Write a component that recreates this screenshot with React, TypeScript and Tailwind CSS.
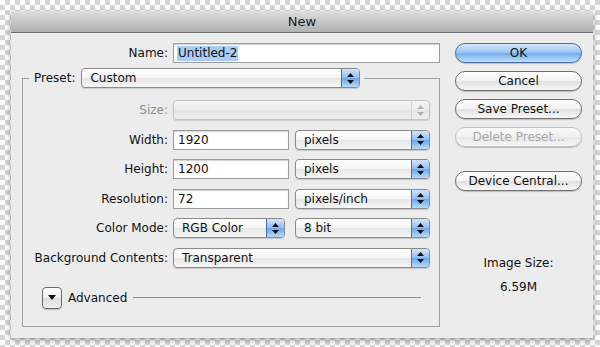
import React from 'react';

const font = 'font-["DejaVu_Sans",sans-serif]';

const Arrows: React.FC<{ disabled?: boolean }> = ({ disabled }) => (
  <svg width="7" height="11" viewBox="0 0 7 11">
    <polygon points="3.5,0 7,4 0,4" fill={disabled ? '#b4b4b4' : '#111'} />
    <polygon points="0,7 7,7 3.5,11" fill={disabled ? '#b4b4b4' : '#111'} />
  </svg>
);

const Popup: React.FC<{ value?: string; w: string; disabled?: boolean }> = ({ value, w, disabled }) => (
  <div
    className={`${w} h-[20px] flex items-stretch rounded-[4px] border shadow-[0_1px_1px_rgba(0,0,0,0.15)] ${
      disabled
        ? 'border-[#c4c4c4] bg-[linear-gradient(180deg,#f4f4f4_0%,#ececec_50%,#e4e4e4_51%,#efefef_100%)]'
        : 'border-[#8a8a8a] bg-[linear-gradient(180deg,#ffffff_0%,#f4f4f4_50%,#e6e6e6_51%,#f6f6f6_100%)]'
    }`}
  >
    <div className="flex-1 pl-[8px] flex items-center text-[12px] text-[#111] leading-none">{value}</div>
    <div
      className={`w-[18px] flex items-center justify-center rounded-r-[3px] ${
        disabled
          ? 'border-l border-[#d4d4d4]'
          : 'border-l border-[#4a6fb0] bg-[linear-gradient(180deg,#d2e5fb_0%,#94bef0_48%,#6ea7ea_52%,#b6dcfc_100%)]'
      }`}
    >
      <Arrows disabled={disabled} />
    </div>
  </div>
);

const Field: React.FC<{ value: string; w: string }> = ({ value, w }) => (
  <div className={`${w} h-[20px] flex items-center pl-[4px] bg-white border border-[#9c9c9c] shadow-[inset_0_1px_1px_rgba(0,0,0,0.18)] text-[12px] text-[#111]`}>
    {value}
  </div>
);

const Row: React.FC<{ label: string; disabled?: boolean; children: React.ReactNode }> = ({ label, disabled, children }) => (
  <div className="flex items-center h-[20px]">
    <div className={`w-[145px] text-right text-[12px] ${disabled ? 'text-[#8e8e8e]' : 'text-[#111]'}`}>{label}</div>
    <div className="ml-[5px] flex gap-[6px]">{children}</div>
  </div>
);

const Button: React.FC<{ label: string; primary?: boolean; disabled?: boolean; className?: string }> = ({
  label,
  primary,
  disabled,
  className = '',
}) => (
  <div
    className={`h-[20px] rounded-full flex items-center justify-center text-[12px] leading-none border shadow-[0_1px_1px_rgba(0,0,0,0.2)] ${className} ${
      primary
        ? 'border-[#4d6ea6] text-[#111] bg-[linear-gradient(180deg,#d6e9fc_0%,#98c3f2_48%,#74aced_52%,#bde0fd_100%)]'
        : disabled
        ? 'border-[#c2c2c2] text-[#a8a8a8] bg-[linear-gradient(180deg,#fafafa_0%,#f0f0f0_50%,#e8e8e8_51%,#f4f4f4_100%)]'
        : 'border-[#707070] text-[#111] bg-[linear-gradient(180deg,#ffffff_0%,#f3f3f3_48%,#e2e2e2_52%,#f7f7f7_100%)]'
    }`}
  >
    {label}
  </div>
);

export default function App() {
  return (
    <div
      className={`${font} w-[600px] h-[347px] pt-[11px] pl-[11px] bg-[conic-gradient(#d6d6d6_25%,#ffffff_0_50%,#d6d6d6_0_75%,#ffffff_0)] bg-[length:10px_10px]`}
    >
      <div className="w-[582px] h-[327px] flex flex-col shadow-[0_2px_6px_rgba(0,0,0,0.35)]">
        <div className="h-[22px] border-b border-[#6e6e6e] bg-[linear-gradient(180deg,#dedede_0%,#c6c6c6_50%,#b2b2b2_100%)] flex items-center justify-center text-[13px] text-[#1a1a1a]">
          New
        </div>

        <div className="flex-1 flex bg-[#ececec] pt-[10px] pb-[11px]">
          <div className="ml-[11px] w-[418px] flex flex-col">
            <div className="flex items-center h-[20px]">
              <div className="w-[146px] text-right text-[12px] text-[#111]">Name:</div>
              <div className="ml-[5px] w-[267px] h-[20px] flex items-center pl-[3px] bg-white border border-[#9c9c9c] shadow-[inset_0_1px_1px_rgba(0,0,0,0.18)] text-[12px] text-[#111]">
                <span className="bg-[#a9cdf7] px-[1px] leading-[15px]">Untitled-2</span>
              </div>
            </div>

            <fieldset className="mt-[5px] flex-1 border border-[#a2a2a2] pt-[12px]">
              <legend className="ml-[6px] px-[4px]">
                <div className="flex items-center">
                  <span className="text-[12px] text-[#111] pl-[1px]">Preset:</span>
                  <div className="ml-[6px]">
                    <Popup value="Custom" w="w-[279px]" />
                  </div>
                </div>
              </legend>

              <div className="flex flex-col gap-[9.5px]">
                <Row label="Size:" disabled>
                  <Popup w="w-[257px]" disabled />
                </Row>
                <Row label="Width:">
                  <Field value="1920" w="w-[116px]" />
                  <Popup value="pixels" w="w-[135px]" />
                </Row>
                <Row label="Height:">
                  <Field value="1200" w="w-[116px]" />
                  <Popup value="pixels" w="w-[135px]" />
                </Row>
                <Row label="Resolution:">
                  <Field value="72" w="w-[116px]" />
                  <Popup value="pixels/inch" w="w-[135px]" />
                </Row>
                <Row label="Color Mode:">
                  <Popup value="RGB Color" w="w-[112px]" />
                  <div className="ml-[4px]">
                    <Popup value="8 bit" w="w-[135px]" />
                  </div>
                </Row>
                <Row label="Background Contents:">
                  <Popup value="Transparent" w="w-[257px]" />
                </Row>
              </div>

              <div className="mt-[19px] pl-[19px] pr-[18px] flex items-center">
                <div className="w-[20px] h-[22px] rounded-[4px] border border-[#6a6a6a] bg-[linear-gradient(180deg,#ffffff_0%,#eeeeee_50%,#dddddd_51%,#f0f0f0_100%)] shadow-[0_1px_1px_rgba(0,0,0,0.2)] flex items-center justify-center">
                  <svg width="8" height="5" viewBox="0 0 8 5">
                    <polygon points="0,0 8,0 4,5" fill="#111" />
                  </svg>
                </div>
                <span className="ml-[6px] text-[12px] text-[#111]">Advanced</span>
                <div className="ml-[6px] flex-1 h-px bg-[#8a8a8a]" />
              </div>
            </fieldset>
          </div>

          <div className="ml-[15px] w-[127px] flex flex-col">
            <div className="flex flex-col gap-[8px]">
              <Button label="OK" primary />
              <Button label="Cancel" />
              <Button label="Save Preset..." />
              <Button label="Delete Preset..." disabled />
            </div>
            <Button label="Device Central..." className="mt-[24px]" />
            <div className="mt-[64px] flex flex-col items-center gap-[8px] text-[12px] text-[#111] leading-[16px]">
              <span>Image Size:</span>
              <span>6.59M</span>
            </div>
          </div>
        </div>
      </div>
    </div>
  );
}
